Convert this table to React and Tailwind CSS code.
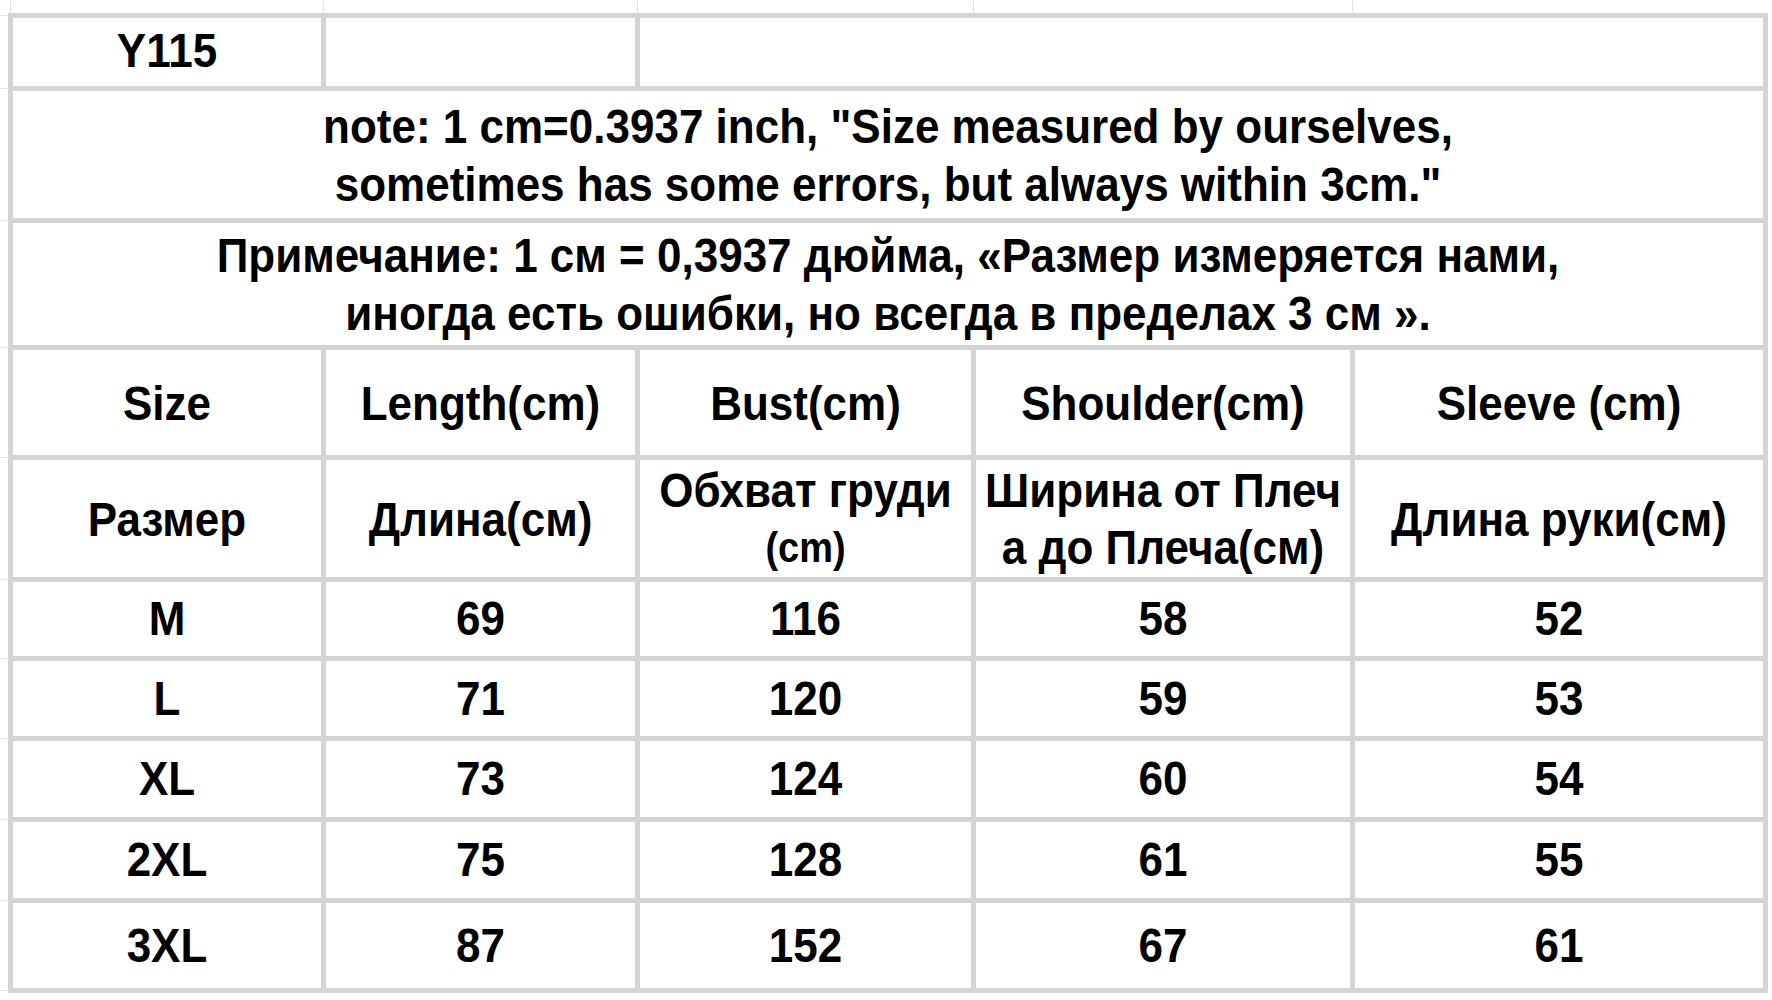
import React from "react";

const F = "font-['Liberation_Sans',Arial,sans-serif]";

function Cell({ children, className = "" }) {
  return (
    <div className={`bg-white flex flex-col items-center justify-center text-center text-black font-bold text-[44px] ${className}`}>
      {children ? <div className="flex flex-col items-center scale-y-[1.1]">{children}</div> : null}
    </div>
  );
}

const rows = [
  ["M", "69", "116", "58", "52"],
  ["L", "71", "120", "59", "53"],
  ["XL", "73", "124", "60", "54"],
  ["2XL", "75", "128", "61", "55"],
  ["3XL", "87", "152", "67", "61"],
];

export default function App() {
  return (
    <div className={`w-[1772px] h-[1000px] bg-white overflow-hidden flex flex-col leading-[58px] ${F}`}>
      {/* top faint spreadsheet gridlines */}
      <div className="h-[13px] flex shrink-0">
        <div className="w-[10px]" />
        <div className="w-px bg-[#e3e3e3]" />
        <div className="w-[312px]" />
        <div className="w-px bg-[#e3e3e3]" />
        <div className="w-[313px]" />
        <div className="w-px bg-[#e3e3e3]" />
        <div className="w-[335px]" />
        <div className="w-px bg-[#e3e3e3]" />
        <div className="w-[378px]" />
        <div className="w-px bg-[#e3e3e3]" />
      </div>
      <div className="flex">
        {/* left faint gridlines */}
        <div className="w-[8px] flex flex-col shrink-0">
          <div className="h-[2px]" />
          <div className="h-px bg-[#e3e3e3]" />
          <div className="h-[72px]" />
          <div className="h-px bg-[#e3e3e3]" />
          <div className="h-[131px]" />
          <div className="h-px bg-[#e3e3e3]" />
          <div className="h-[126px]" />
          <div className="h-px bg-[#e3e3e3]" />
          <div className="h-[109px]" />
          <div className="h-px bg-[#e3e3e3]" />
          <div className="h-[121px]" />
          <div className="h-px bg-[#e3e3e3]" />
          <div className="h-[78px]" />
          <div className="h-px bg-[#e3e3e3]" />
          <div className="h-[79px]" />
          <div className="h-px bg-[#e3e3e3]" />
          <div className="h-[80px]" />
          <div className="h-px bg-[#e3e3e3]" />
          <div className="h-[80px]" />
          <div className="h-px bg-[#e3e3e3]" />
          <div className="h-[89px]" />
          <div className="h-px bg-[#e3e3e3]" />
        </div>
        <div className="w-[1760px] shrink-0 grid grid-cols-[308px_309px_331px_374px_408px] grid-rows-[68px_127px_122px_105px_117px_74px_75px_76px_76px_85px] gap-[5px] p-[5px] bg-[#d4d4d4]">
          <Cell className="pb-[4px]">Y115</Cell>
          <Cell />
          <Cell className="col-span-3" />
          <Cell className="col-span-5">
            <div className="leading-[53px]">note: 1 cm=0.3937 inch, "Size measured by ourselves,</div>
            <div className="leading-[53px]">sometimes has some errors, but always within 3cm."</div>
          </Cell>
          <Cell className="col-span-5">
            <div className="leading-[53px]">Примечание: 1 см = 0,3937 дюйма, «Размер измеряется нами,</div>
            <div className="leading-[53px]">иногда есть ошибки, но всегда в пределах 3 см ».</div>
          </Cell>
          <Cell>Size</Cell>
          <Cell>Length(cm)</Cell>
          <Cell>Bust(cm)</Cell>
          <Cell>Shoulder(cm)</Cell>
          <Cell>Sleeve (cm)</Cell>
          <Cell>Размер</Cell>
          <Cell>Длина(см)</Cell>
          <Cell>
            <div className="leading-[52px]">Обхват груди</div>
            <div className="text-[38px] leading-[52px]">(cm)</div>
          </Cell>
          <Cell>
            <div className="leading-[52px]">Ширина от Плеч</div>
            <div className="leading-[52px]">а до Плеча(см)</div>
          </Cell>
          <Cell>Длина руки(см)</Cell>
          {rows.map((r) =>
            r.map((v, i) => <Cell key={r[0] + i}>{v}</Cell>)
          )}
        </div>
      </div>
    </div>
  );
}
